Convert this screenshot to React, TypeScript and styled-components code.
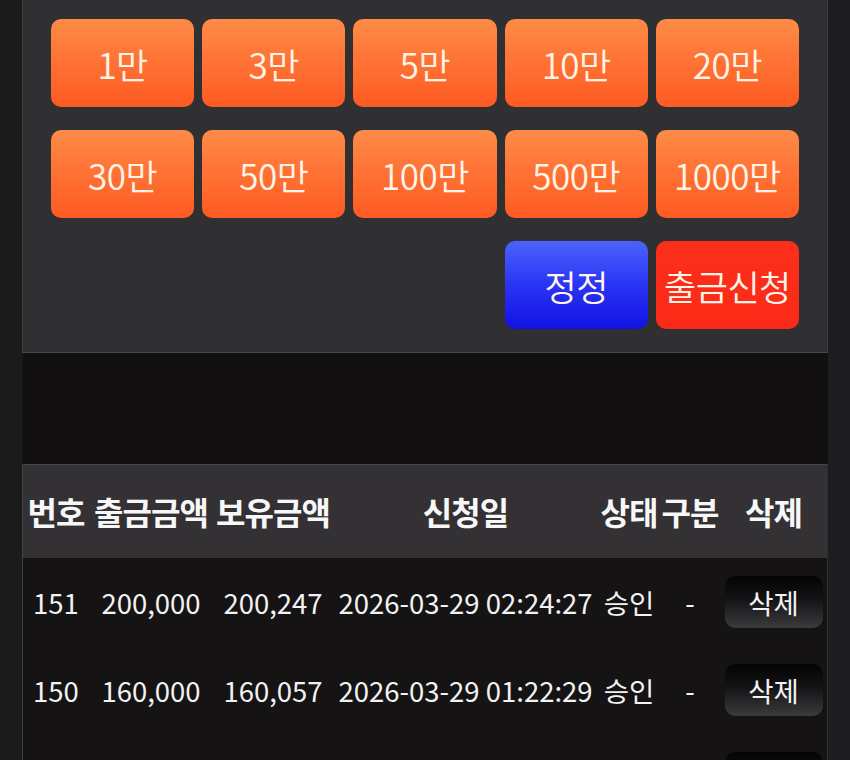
import React from "react";
import styled, { createGlobalStyle } from "styled-components";

const GlobalStyle = createGlobalStyle`
    html, body {
        margin: 0;
        padding: 0;
        background: #1c1b1d;
    }

    body {
        font-family: "Noto Sans CJK KR", "Noto Sans", sans-serif;
        color: #f4f4f4;
    }
`;

const Page = styled.div`
    display: flex;
    justify-content: center;
    width: 850px;
    min-height: 760px;
    background: linear-gradient(90deg, #1b1b1b 0, #1b1b1b 22px, #1d1c1f 828px);
`;

const Column = styled.main`
    display: flex;
    flex-direction: column;
    width: 806px;
    background-color: #110f10;
`;

const AmountPanel = styled.section`
    display: grid;
    grid-template-columns: repeat(5, 1fr);
    column-gap: 8px;
    row-gap: 23px;

    padding: 19px 28px 23px;

    background-color: #302f31;
    border-left: 1px solid #3c3b3d;
    border-right: 1px solid #3c3b3d;
    border-bottom: 1px solid #48474a;
`;

const tones = {
    orange: "linear-gradient(180deg, #fd8b47 0%, #ff7436 45%, #fe5a22 100%)",
    blue: "linear-gradient(180deg, #4b64fb 0%, #2a34f4 50%, #1212e4 100%)",
    red: "linear-gradient(180deg, #fb2f1c 0%, #fb2a17 100%)",
};

const AmountButton = styled.button<{ tone: keyof typeof tones; col?: number }>`
    grid-column: ${props => props.col ?? "auto"};
    height: 88px;
    padding: 0;

    border: none;
    border-radius: 10px;
    background: ${props => tones[props.tone]};

    font-family: "Noto Sans CJK KR", sans-serif;
    font-size: 35px;
    font-weight: 350;
    letter-spacing: -0.5px;
    color: #fff4e8;

    cursor: pointer;
`;

const Spacer = styled.div`
    height: 111px;
    background-color: #110f10;
    border-left: 1px solid #1a1819;
`;

const Table = styled.section`
    display: flex;
    flex-direction: column;
    background-color: #161315;
    border-left: 1px solid #403f42;
    border-right: 1px solid #2e2d30;
`;

const COLUMNS = "66px 124px 120px 265px 62px 60px 1fr";

const HeadRow = styled.div`
    display: grid;
    grid-template-columns: ${COLUMNS};
    align-items: center;
    height: 93px;

    background-color: #333134;
    border-top: 1px solid #48474a;

    span {
        text-align: center;
        white-space: nowrap;
        font-size: 32px;
        font-weight: 700;
        letter-spacing: -1px;
        color: #f7f7f7;
        padding-bottom: 2px;
    }
`;

const Row = styled.div`
    display: grid;
    grid-template-columns: ${COLUMNS};
    align-items: center;
    height: 88px;

    span {
        text-align: center;
        white-space: nowrap;
        font-size: 27.5px;
        color: #f2f2f2;
    }
`;

const DeleteButton = styled.button`
    justify-self: center;
    width: 98px;
    height: 52px;

    border: none;
    border-radius: 10px;
    background: linear-gradient(180deg, #040304 0%, #141315 45%, #3b3a3d 100%);

    font-family: "Noto Sans CJK KR", sans-serif;
    font-size: 27.5px;
    color: #f4f4f4;

    cursor: pointer;
`;

const amounts = ["1만", "3만", "5만", "10만", "20만", "30만", "50만", "100만", "500만", "1000만"];

const history = [
    { no: 151, amount: "200,000", balance: "200,247", date: "2026-03-29 02:24:27", state: "승인", kind: "-" },
    { no: 150, amount: "160,000", balance: "160,057", date: "2026-03-29 01:22:29", state: "승인", kind: "-" },
    { no: 149, amount: "100,000", balance: "100,112", date: "2026-03-28 23:10:41", state: "승인", kind: "-" },
];

export default function App() {
    return (
        <>
            <GlobalStyle />
            <Page>
                <Column>
                    <AmountPanel>
                        {amounts.map(a => (
                            <AmountButton key={a} tone="orange">{a}</AmountButton>
                        ))}
                        <AmountButton tone="blue" col={4}>정정</AmountButton>
                        <AmountButton tone="red">출금신청</AmountButton>
                    </AmountPanel>

                    <Spacer />

                    <Table>
                        <HeadRow>
                            <span>번호</span>
                            <span>출금금액</span>
                            <span>보유금액</span>
                            <span>신청일</span>
                            <span>상태</span>
                            <span>구분</span>
                            <span>삭제</span>
                        </HeadRow>
                        {history.map(h => (
                            <Row key={h.no}>
                                <span>{h.no}</span>
                                <span>{h.amount}</span>
                                <span>{h.balance}</span>
                                <span>{h.date}</span>
                                <span>{h.state}</span>
                                <span>{h.kind}</span>
                                <DeleteButton>삭제</DeleteButton>
                            </Row>
                        ))}
                    </Table>
                </Column>
            </Page>
        </>
    );
}
